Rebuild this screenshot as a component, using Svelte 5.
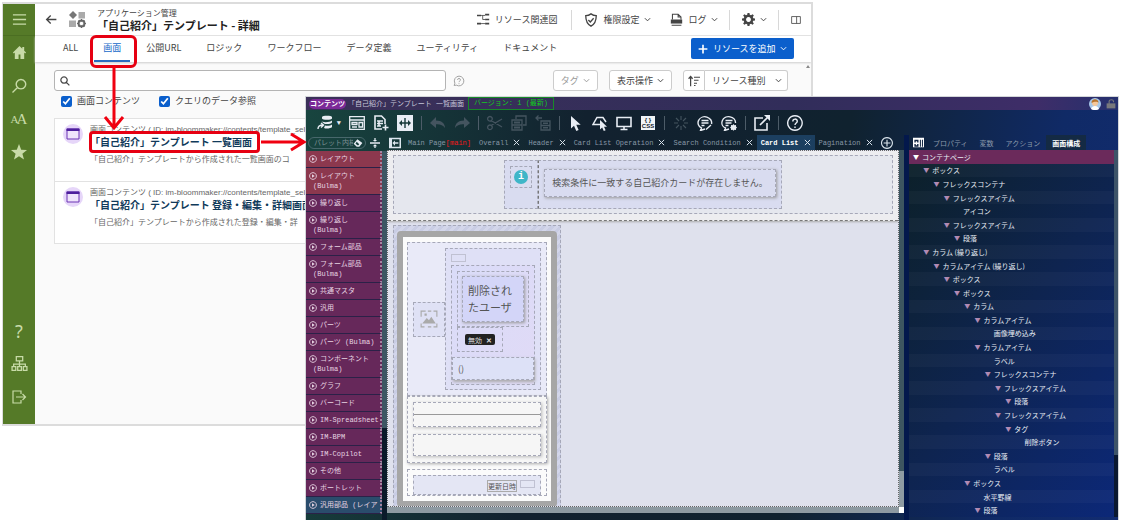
<script lang="ts">
  interface Icon { s?: string; f?: string; w?: number }

  // 16x16 グリッドのアイコン。s = 線、f = 塗り
  const icons: Record<string, Icon> = {
    menu: { s: 'M1 3h14M1 8h14M1 13h14', w: 1.4 },
    home: { f: 'M8 1L1 8l1 1 1-1v7h4v-5h2v5h4V8l1 1 1-1-2-2V2h-2v2z' },
    search: { s: 'M10 1.500a4.700 4.700 0 1 1-.1 0zM6.500 9.500L1.500 14.500', w: 1.4 },
    star: { f: 'M8 0l2.200 5.700 5.800.3-4.600 3.700L13 15.500 8 12.200 3 15.500l1.600-5.800L0 6l5.800-.3z' },
    sitemap: { s: 'M5 1.500h6v4H5zM8 5.500v3M2.500 11V8.500h11V11M8 8v3M1 11h3.500v3.500H1zM6.300 11h3.500v3.500H6.300zM11.600 11H15v3.500h-3.400z', w: 1.2 },
    logout: { s: 'M10 5V2H2v12h8v-3M5 8h9.500M11.500 5l3 3-3 3', w: 1.2 },
    back: { s: 'M14 8H2.500M7 3L2 8l5 5', w: 1.6 },
    lens: { s: 'M6.500 1.500a5 5 0 1 1-.1 0zM10.200 10.200L15 15', w: 2 },
    chevron: { s: 'M2 5l6 6 6-6', w: 2.2 },
    relation: { s: 'M5 3h5M7 3v5h3M5 13h5', w: 1, f: 'M0 2h5v2H0zM10 1h5v2h-5zM10 7h5v2h-5zM0 12h5v2H0zM10 12h5v2h-5z' },
    shield: { s: 'M8 1c2 1.500 4 2 6 2 0 6-1.500 9.500-6 12C3.500 12.500 2 9 2 3c2 0 4-.5 6-2zM5 8l2.200 2.200L11 6', w: 1.5 },
    log: { s: 'M3 8V1.500h7L13.500 5v3M10 1.500V5h3.500M2 15h12', w: 1.3, f: 'M1 8h14v5H1z' },
    gear: { f: 'M6.800 0h2.400l.4 2.200 1.500.6L13 1.500 14.600 3.100l-1.300 1.900.6 1.500L16 6.800v2.400l-2.200.4-.6 1.500 1.400 1.900-1.700 1.600-1.800-1.300-1.500.6L9.200 16H6.800l-.4-2.100-1.500-.6L3 14.600 1.400 13l1.300-1.900-.6-1.500L0 9.200V6.800l2.200-.4.6-1.500L1.400 3 3 1.400l1.900 1.300 1.500-.6zM8 5a3 3 0 1 0 .01 0z' },
    panel: { s: 'M1 2.500h14v11H1zM9 2.500v11', w: 1.3 },
    plus: { s: 'M8 1v14M1 8h14', w: 2.6 },
    question: { s: 'M8 1.500a6.500 6.500 0 1 1-3.500 12L1.500 14l1-3A6.500 6.500 0 0 1 8 1.500zM6 6.500C6 4 10 4 10 6.500 10 8 8 8 8 9.500M8 11v1.200', w: 1.2 },
    sort: { s: 'M3.500 15V2M.8 5l2.700-3 2.700 3M8 3h8M8 7h6M8 11h4M8 14h2', w: 1.6 },
    stack: { s: 'M1 14c0-3 2-4 5-4M4 8l2.500 2L4 12.500', w: 1.4, f: 'M5 2c0-1.800 10-1.800 10 0v1.500c0 1.800-10 1.800-10 0zM4 6c1 1.600 9 1.600 11-.5v2c-1 1.800-7 2-8 1zM8 10.500c2 .6 6 .2 7-1v2.500c-1 1.500-6 2-8 1z' },
    layout: { s: 'M.7 1.700h14.600v12.600H.7zM.7 5h14.600M3 7.500h5v2H3zM3 12h5M10 7.500h3.500v4.500H10z', w: 1.3 },
    addDoc: { s: 'M9 14H2V1h6.500L12 4.500V9M4 6h6M4 8.500h6M4 11h4M6 6v5M12.500 9.500v6M9.500 12.500h6', w: 1.6 },
    fit: { f: 'M0 0h16v16H0zM7.300 3v4.300H5V5L2 8l3 3V8.700h2.300V13h1.400V8.700H11V11l3-3-3-3v2.300H8.700V3z' },
    undo: { f: 'M0 8l6-6v3.500c6 0 9 3.500 9 7.500-2-3-5-4-9-3.700V13z' },
    redo: { f: 'M16 8l-6-6v3.500c-6 0-9 3.500-9 7.500 2-3 5-4 9-3.700V13z' },
    cut: { s: 'M4 5.500L15 12M4 10.500L15 4M3 1.500a2.300 2.300 0 1 1-.1 0zM3 10a2.300 2.300 0 1 1-.1 0z', w: 1.3 },
    copy: { s: 'M5 4V1h10v9h-3M1 5h10v10H1zM1 10h10', w: 1.3, f: 'M3 6.500h6v2H3zM3 11.500h6v2H3z' },
    paste: { s: 'M6 6h9v9H6zM6 10.500h9M1 3h6M3.500.5L1 3l2.500 2.500', w: 1.3, f: 'M8 7.500h5v1.500H8zM8 12h5v1.500H8z' },
    cursor: { f: 'M3 1v12.500l3-2.800L8.300 16l2.300-1L8.300 9.800h4.400z' },
    lasso: { s: 'M9 9.500H1L5 2.500h6l3 4.500', w: 1.5, f: 'M8 5v9.500l2.200-2 1.600 3.500 1.800-.8-1.600-3.500H15z' },
    monitor: { s: 'M1 2.500h14v9H1zM8 11.500v3M4.500 14.500h7', w: 1.6 },
    spark: { s: 'M8 1v4M8 11v4M1 8h4M11 8h4M3 3l3 3M10 10l3 3M13 3l-3 3M6 10l-3 3', w: 1.1 },
    comment: { s: 'M14.500 9A6.800 6 0 1 0 4.500 13L3.500 15.500 8 14M4.500 5.500h7M4.500 8h7M4.500 10.500h3M9 14.500l5-4.500', w: 1.4 },
    commentGear: { s: 'M14.500 8A6.800 6 0 1 0 4.500 13L3.500 15.500 8 14M4.500 5.500h7M4.500 8h6M4.500 10.500h3', w: 1.4, f: 'M12.500 9l1 1.200 1.500-.2v1.500l1 1-1 1v1.500l-1.500-.2-1 1-1-1-1.500.2v-1.500l-1-1 1-1V10l1.500.2z' },
    external: { s: 'M9 3H1v12h12V8M6 10l8.500-8.500', w: 1.6, f: 'M10 0h6v6z' },
    help: { s: 'M8 .8a7.200 7.200 0 1 1-.1 0zM5.800 6.500C5.800 3.300 10.300 3.300 10.300 6.300 10.300 8 8 8 8 10M8 11.500v1.500', w: 1.4 },
    x: { s: 'M2 2l12 12M14 2L2 14', w: 2.200 },
    addTab: { s: 'M8 .8a7.200 7.200 0 1 1-.1 0zM8 3.500v9M3.500 8h9', w: 1.5 },
    play: { s: 'M8 1.200a6.800 6.800 0 1 1-.1 0z', w: 1.8, f: 'M6 4.500l5.500 3.500L6 11.500z' },
    eraser: { f: 'M7 2l8 6-5 6H6L1 9zM6 6L4 9l4 3 2-2z' },
    collapse: { s: 'M0 8h16', w: 2.4, f: 'M7 0h2v3h2.500L8 6 4.500 3H7zM7 16h2v-3h2.500L8 10l-3.500 3H7z' },
    dockLeft: { f: 'M0 1h16v14H0zM4 3v10h10V3zM8 4.500V7h4.500v2H8v2.500L4.500 8z' },
    dockRight: { f: 'M0 1h16v14H0zM2 4v10h6V4zM10 4v10h1.500V4zM13 4v10h1.500V4zM4 6h2v2h2v2H6v2H4v-2H2V8h2z' },
    lock: { s: 'M5 8V3.500c0-3 7-3 7 0V5', w: 1.8, f: 'M1 7h14v8H1z' },
    picture: { s: 'M1 6V1h4M7 1h3M12 1h3v5M15 12v3h-3M10 15H7M4 15H1v-3', w: 1, f: 'M2 12l4-5 2 2 2-3 4 6zM4 3h2v2H4z' },
  };

  const tabs = ['ALL', '画面', '公開URL', 'ロジック', 'ワークフロー', 'データ定義', 'ユーティリティ', 'ドキュメント'];

  const resources = [
    { title: '「自己紹介」テンプレート 一覧画面', text: '「自己紹介」テンプレートから作成された一覧画面のコ', marked: true },
    { title: '「自己紹介」テンプレート 登録・編集・詳細画面', text: '「自己紹介」テンプレートから作成された登録・編集・詳', marked: false },
  ];

  const tools = [
    ['layout', 'addDoc', 'fit'],
    ['undo', 'redo'],
    ['cut', 'copy', 'paste'],
    ['cursor', 'lasso', 'monitor', 'css'],
    ['spark', 'comment', 'commentGear'],
    ['external'],
    ['help'],
  ];
  const disabled = ['undo', 'redo', 'cut', 'copy', 'paste', 'spark'];

  const palette = [
    ['レイアウト', '', 'red'], ['レイアウト', '(Bulma)', 'red'], ['繰り返し'], ['繰り返し', '(Bulma)'],
    ['フォーム部品'], ['フォーム部品', '(Bulma)'], ['共通マスタ'], ['汎用'], ['パーツ'], ['パーツ (Bulma)'],
    ['コンポーネント', '(Bulma)'], ['グラフ'], ['バーコード'], ['IM-Spreadsheet'], ['IM-BPM'], ['IM-Copilot'],
    ['その他'], ['ポートレット'], ['汎用部品 (レイア', '', 'blue'],
  ];

  const pages = ['Overall', 'Header', 'Card List Operation', 'Search Condition', 'Card List', 'Pagination'];

  // [階層, 名前, 子要素あり]
  const tree: [number, string, boolean][] = [
    [0, 'コンテナページ', true], [1, 'ボックス', true], [2, 'フレックスコンテナ', true], [3, 'フレックスアイテム', true],
    [4, 'アイコン', false], [3, 'フレックスアイテム', true], [4, '段落', true], [1, 'カラム (繰り返し)', true],
    [2, 'カラムアイテム (繰り返し)', true], [3, 'ボックス', true], [4, 'ボックス', true], [5, 'カラム', true],
    [6, 'カラムアイテム', true], [7, '画像埋め込み', false], [6, 'カラムアイテム', true], [7, 'ラベル', false],
    [7, 'フレックスコンテナ', true], [8, 'フレックスアイテム', true], [9, '段落', true], [8, 'フレックスアイテム', true],
    [9, 'タグ', true], [10, '削除ボタン', false], [7, '段落', true], [7, 'ラベル', false], [5, 'ボックス', true],
    [6, '水平罫線', false], [6, '段落', true],
  ];
</script>

{#snippet icon(name: string, size = 16)}
  {@const i = icons[name]}
  <svg width={size} height={size} viewBox="0 0 16 16" aria-hidden="true">
    {#if i.f}<path d={i.f} fill="currentColor" fill-rule="evenodd" />{/if}
    {#if i.s}<path d={i.s} fill="none" stroke="currentColor" stroke-width={i.w} />{/if}
  </svg>
{/snippet}

<div class="desktop">
  <section class="admin">
    <nav class="rail">
      <button class="burger" aria-label="メニュー">{@render icon('menu', 15)}</button>
      <button aria-label="ホーム">{@render icon('home', 15)}</button>
      <button aria-label="検索">{@render icon('search', 16)}</button>
      <button class="aa" aria-label="文字サイズ"><small>A</small>A</button>
      <button aria-label="お気に入り">{@render icon('star', 16)}</button>
      <span class="fill"></span>
      <button class="q" aria-label="ヘルプ">?</button>
      <button aria-label="サイトマップ">{@render icon('sitemap', 17)}</button>
      <button aria-label="ログアウト">{@render icon('logout', 16)}</button>
    </nav>

    <div class="main">
      <header>
        <button aria-label="戻る">{@render icon('back', 13)}</button>
        <svg class="app" width="17" height="17" viewBox="0 0 17 17" aria-hidden="true">
          <path d="M4 0l4 4-4 4-4-4z" fill="#777" />
          <path d="M9.500 1H16v6.500H9.500zM0 9.500h7V16H0z" fill="#aaa" />
          <circle cx="12.500" cy="12.500" r="3" fill="none" stroke="#666" stroke-width="2" />
          <path d="M12.500 8v9M8 12.500h9M9.500 9.500l6 6M15.500 9.500l-6 6" stroke="#666" stroke-width="1" />
          <circle cx="12.500" cy="12.500" r="1.800" fill="#fff" />
        </svg>
        <div class="heading">
          <span>アプリケーション管理</span>
          <h1>「自己紹介」テンプレート - 詳細</h1>
        </div>
        <button class="rel">{@render icon('relation', 13)}リソース関連図</button>
        <button class="bar">{@render icon('shield', 14)}権限設定{@render icon('chevron', 7)}</button>
        <button class="log">{@render icon('log', 13)}ログ{@render icon('chevron', 7)}</button>
        <button class="bar" aria-label="設定">{@render icon('gear', 13)}{@render icon('chevron', 7)}</button>
        <button class="bar" aria-label="パネル">{@render icon('panel', 10)}</button>
      </header>

      <div class="tabs">
        {#each tabs as t (t)}
          <button class:active={t === '画面'}>{t}</button>
        {/each}
        <button class="add">{@render icon('plus', 10)}リソースを追加{@render icon('chevron', 7)}</button>
      </div>

      <div class="content">
        <div class="filter">
          <label class="search">{@render icon('lens', 10)}<input type="search" aria-label="リソース検索" /></label>
          <span class="hint">{@render icon('question', 12)}</span>
          <button class="dim">タグ{@render icon('chevron', 7)}</button>
          <button>表示操作{@render icon('chevron', 7)}</button>
          <div class="sort">
            <button aria-label="並び順">{@render icon('sort', 12)}</button>
            <button>リソース種別{@render icon('chevron', 7)}</button>
          </div>
        </div>
        <div class="checks">
          <label><input type="checkbox" checked />画面コンテンツ</label>
          <label><input type="checkbox" checked />クエリのデータ参照</label>
        </div>
        <ul class="list">
          {#each resources as r (r.title)}
            <li>
              <span class="badge">
                <svg width="14" height="12" viewBox="0 0 14 12" aria-hidden="true">
                  <path d="M1 1h12v10H1z" fill="#efe4fb" stroke="#6a32b4" stroke-width="1" /><path d="M.5.5h13V3H.5z" fill="#4d1f9c" />
                </svg>
              </span>
              <div>
                <p class="id">画面コンテンツ ( ID: im-bloommaker://contents/template_self_</p>
                <a href="#resource" class:marked={r.marked}>{r.title}</a>
                <p class="text">{r.text}</p>
              </div>
            </li>
          {/each}
        </ul>
      </div>
    </div>
  </section>

  <section class="editor">
    <div class="strip">
      <span class="kind">コンテンツ</span>
      <span class="name">「自己紹介」テンプレート 一覧画面</span>
      <span class="version">バージョン: 1 (最新)</span>
      <span class="fill"></span>
      <svg width="12" height="12" viewBox="0 0 12 12" aria-hidden="true">
        <circle cx="6" cy="6" r="6" fill="#a9c9ea" /><circle cx="6" cy="5" r="3" fill="#f5c79a" />
        <path d="M2.500 5C2 0 10 0 9.500 5 8 3 5 4 2.500 5z" fill="#b8742c" /><path d="M2 11c1-4 7-4 8 0-2 1.400-6 1.400-8 0z" fill="#fff" />
      </svg>
      <span class="lock">{@render icon('lock', 10)}</span>
    </div>

    <div class="tools">
      <button class="stack" aria-label="リソース">{@render icon('stack')}<span>▼</span></button>
      {#each tools as group, g}
        {#if g}<i></i>{/if}
        {#each group as t (t)}
          <button aria-label={t} class:off={disabled.includes(t)}>
            {#if t === 'css'}<span class="css"><b>{'{ }'}</b><b>CSS</b></span>{:else}{@render icon(t)}{/if}
          </button>
        {/each}
      {/each}
    </div>

    <div class="body">
      <aside class="palette">
        <div class="find">
          <label><input type="text" placeholder="パレット内検索" aria-label="パレット内検索" />{@render icon('eraser', 10)}</label>
          {@render icon('collapse', 10)}
        </div>
        {#each palette as [name, sub, tone]}
          <button class={['item', tone, sub && 'double']}>
            {@render icon('play', 8)}<span>{name}</span>
            {#if sub}<small>{sub}</small>{/if}
          </button>
        {/each}
      </aside>
      <div class="gutter"></div>

      <div class="work">
        <div class="pages">
          <button class="dock" aria-label="パレットを閉じる">{@render icon('dockLeft', 12)}</button>
          <button class="home">Main Page<em>[main]</em></button>
          {#each pages as p (p)}
            <button class:active={p === 'Card List'}>{p}{@render icon('x', 7)}</button>
          {/each}
          <button class="new" aria-label="ページを追加">{@render icon('addTab', 12)}</button>
        </div>
        <div class="view">
          <div class="canvas">
            <div class="notice">
              <div class="box inner">
                <div class="message">
                  <div class="box cell"><div class="box info"><span>i</span></div></div>
                  <div class="box cell"><p class="box para">検索条件に一致する自己紹介カードが存在しません。</p></div>
                </div>
              </div>
            </div>
            <div class="box column">
              <div class="card">
                <div class="box profile">
                  <div class="box photo">{@render icon('picture', 18)}</div>
                  <div class="box detail">
                    <div class="chip"></div>
                    <div class="box user">
                      <div class="box who"><p class="box">削除され<br />たユーザ</p></div>
                      <div class="box tagbox"><span class="tag">無効 <b>✕</b></span></div>
                      <p class="box kana">()</p>
                    </div>
                  </div>
                </div>
                <div class="box lines">
                  <div class="box"><hr /></div>
                  <div class="box blank"></div>
                </div>
                <div class="box foot">
                  <div class="box"><span>更新日時</span><div class="chip"></div></div>
                </div>
              </div>
            </div>
          </div>
          <div class="vbar"></div>
          <div class="hbar"></div>
          <div class="corner"></div>
        </div>
      </div>

      <div class="split"></div>
      <aside class="outline">
        <div class="panes">
          <button class="dock" aria-label="パネルを閉じる">{@render icon('dockRight', 11)}</button>
          <button>プロパティ</button>
          <button>変数</button>
          <button>アクション</button>
          <button class="active">画面構成</button>
        </div>
        <div class="treewrap">
          <ul>
            {#each tree as [depth, name, open], n}
              <li class:selected={n === 0} style="padding-left: {depth * 5}%">
                <span>{open ? '▼' : ''}</span>{name}
              </li>
            {/each}
          </ul>
          <div class="track"></div>
        </div>
      </aside>
    </div>
  </section>

  <svg class="arrows" width="310" height="160" viewBox="0 0 310 160" aria-hidden="true">
    <path d="M114 66v61M105 117l9 11 9-11M261 142h42M291 134l13 8-13 8" />
  </svg>
</div>

<style>
  :global(body) { background: #fff; }
  * { box-sizing: border-box; }
  .desktop {
    position: relative; display: grid; grid-template: minmax(0, 1fr) / minmax(0, 1fr); height: 100vh; overflow: hidden;
    font: 9px/12px "Liberation Sans", "Noto Sans CJK JP", sans-serif; color: #444;
  }
  .admin, .editor { grid-area: 1 / 1; display: flex; overflow: hidden; }
  button {
    display: inline-flex; align-items: center; justify-content: center; padding: 0; border: 0;
    background: none; color: inherit; font: inherit; white-space: nowrap; cursor: pointer;
  }
  svg { flex: none; display: block; }
  ul, p, h1 { margin: 0; padding: 0; list-style: none; }
  .fill { flex: 1; }

  /* 管理画面 */
  .admin { z-index: 0; margin: 2px 27.5% 94px 2px; border: solid #dcdcdc; border-width: 2px 2px 2px 1px; background: #fafafa; }
  .rail { display: flex; flex-direction: column; flex: none; width: 32px; padding-bottom: 11px; background: #557a28; color: #c8dba8; }
  .rail button { height: 33px; }
  .rail .burger { height: 32px; border-bottom: 1px solid #4b6e22; }
  .aa { font: 15px/16px "Liberation Serif", serif; }
  .aa small { font-size: 11px; margin-right: -2px; }
  .rail .q { font-family: "Noto Sans", sans-serif; font-size: 18px; }
  .main { flex: 1; min-width: 0; display: flex; flex-direction: column; font-family: "Noto Sans CJK JP", sans-serif; }
  header { display: flex; align-items: center; height: 32px; flex: none; padding: 0 10px; background: #fff; border-bottom: 1px solid #e4e4e4; }
  .app { margin: 0 11px 0 11px; }
  .heading { flex: 1; min-width: 0; white-space: nowrap; }
  .heading span { display: block; font-size: 8px; line-height: 11px; }
  h1 { font-size: 11px; line-height: 14px; color: #222; }
  header button { gap: 5px; height: 20px; }
  header .rel { margin-right: 14px; }
  header .bar { border-left: 1px solid #d8d8d8; padding: 0 11px 0 12px; }
  header .bar:last-child { padding-right: 0; }
  header .log { padding: 0 11px 0 8px; }
  .tabs { display: flex; gap: 7px; height: 26px; flex: none; padding: 0 17px 0 19px; background: #fff; box-shadow: 0 1px 2px #ccc; position: relative; z-index: 1; }
  .tabs button { position: relative; padding: 0 9px; border-bottom: 2px solid transparent; }
  .tabs .active { color: #1569c9; border-color: #2a6cc0; }
  .tabs .active::after { content: ''; position: absolute; inset: -1px -7px -8px -4px; border: 3px solid #e60012; border-radius: 6px; }
  .tabs .add { margin: 2px 0 3px auto; padding: 0 7px; gap: 5px; border: 0; border-radius: 2px; background: #0b5fcc; color: #fff; }
  .content { position: relative; flex: 1; min-height: 0; overflow: hidden; padding: 8px 23px 0 19px; }
  .content::after { content: ''; position: absolute; top: 1px; right: 1px; border: 2px solid transparent; border-bottom: 3px solid #888; }
  .filter { display: flex; align-items: center; height: 21px; }
  .search { flex: 1; display: flex; align-items: center; gap: 5px; height: 21px; padding-left: 5px; border: 1px solid #b4b4b4; border-radius: 3px; background: #fff; }
  .search input { flex: 1; min-width: 0; border: 0; outline: 0; background: none; font: inherit; }
  .hint { color: #999; margin: 0 88px 0 7px; }
  .filter button { height: 21px; padding: 0 7px; gap: 4px; border: 1px solid #ccc; border-radius: 3px; background: #fff; margin-right: 11px; }
  .filter .dim { color: #999; }
  .sort { display: flex; }
  .filter .sort button { margin: 0; padding: 0 4px; border-radius: 3px 0 0 3px; }
  .filter .sort button + button { padding: 0 5px 0 7px; gap: 10px; border-left: 0; border-radius: 0 3px 3px 0; }
  .checks { display: flex; gap: 19px; padding: 4px 7px 0; }
  .checks label { display: flex; align-items: center; gap: 5px; }
  .checks input { width: 11px; height: 11px; margin: 0; accent-color: #0b5fcc; }
  .list { margin: 11px -16px 0 0; border: 1px solid #e2e2e2; background: #fff; }
  li { white-space: nowrap; }
  .list li { display: flex; gap: 7px; height: 62px; padding: 5px 0 0 8px; overflow: hidden; }
  .list li + li { border-top: 1px solid #e2e2e2; }
  .badge { display: grid; place-items: center; flex: none; width: 20px; height: 20px; border-radius: 50%; background: #e6d6f9; }
  .id, .text { color: #666; }
  .id { font: 8px/11px "Liberation Sans", "Noto Sans CJK JP", sans-serif; }
  .list a { position: relative; display: inline-block; font-size: 10px; line-height: 13px; font-weight: bold; color: #103a5a; text-decoration: none; }
  .list .marked::after { content: ''; position: absolute; inset: -4px -8px -5px -1px; border: 3px solid #e60012; border-radius: 4px; }
  .text { margin-top: 4px; font-size: 8px; }

  .arrows { position: absolute; z-index: 2; left: 0; top: 0; fill: none; stroke: #f00010; stroke-width: 3; pointer-events: none; }

  /* エディタ */
  .editor {
    z-index: 1; flex-direction: column; margin: 96px 3px 0 305px; border: solid #d3d6d9; border-width: 1px 1px 0;
    background: linear-gradient(100deg, #18453f 0, #12212f 32%, #10222f 62%, #102a66 86%, #122c70);
    color: #e8edf4; font: 7px/10px "Liberation Mono", "Noto Sans CJK JP", monospace;
  }
  .strip { display: flex; align-items: center; flex: none; height: 13px; padding: 0 2px 0 3px; background: linear-gradient(90deg, #3b3059, #312d5a 60%, #3e2d68 90%, #25306e); }
  .kind { padding: 0 1px; border-radius: 5px; background: #7c2a98; color: #fff; font-weight: bold; }
  .name { margin-left: 2px; color: #c6c6d8; }
  .version { margin-left: 4px; padding: 0 5px; border: 1px solid #188a28; line-height: 11px; color: #12c81e; }
  .lock { margin-left: 5px; color: #78787c; }
  .tools { display: flex; align-items: center; gap: 8px; flex: none; height: 25px; padding-left: 11px; }
  .tools i { width: 1px; height: 14px; background: #4d5c68; }
  .tools button { flex: none; width: 16px; height: 16px; }
  .tools .stack { width: 24px; justify-content: space-between; }
  .off { color: #44545f; }
  .css { display: flex; flex-direction: column; justify-content: center; width: 14px; height: 14px; background: #f0f4f6; color: #13202c; font: 6px/6px "Liberation Sans", sans-serif; }
  .body { flex: 1; min-height: 0; display: grid; grid-template: minmax(0, 1fr) / 76px 5px minmax(0, 1fr) 5px 209px; }
  .palette { overflow: hidden; }
  .find { display: flex; align-items: center; gap: 4px; height: 16px; padding: 0 2px; }
  .find label { flex: 1; min-width: 0; display: flex; align-items: center; height: 12px; padding: 0 2px 0 5px; border: 1px solid #48686c; border-radius: 6px; }
  .find input { width: 100%; min-width: 0; padding: 0; border: 0; outline: 0; background: none; color: #fff; font: inherit; }
  .find input::placeholder { color: #7d9094; }
  .item {
    display: grid; grid-template-columns: 8px 1fr; column-gap: 3px; justify-items: start; align-content: center;
    width: 100%; height: 17px; padding-left: 3px; background: #66285a; color: #e6d4e2;
    border-bottom: 1px solid #2b2148; border-right: 2px dotted #a584a2;
  }
  .double { height: 27px; }
  .item small { grid-column: 1 / 3; margin-left: 4px; font-size: 7px; }
  .item.red { background: #8c384e; }
  .item.blue { background: #2a4c6c; }
  .gutter { margin-top: 16px; background: linear-gradient(#3c5663 75%, #0a1a2a 75%); }
  .work { display: flex; flex-direction: column; min-width: 0; min-height: 0; padding-bottom: 7px; }
  .pages { display: flex; height: 15px; flex: none; color: #8797a6; overflow: hidden; }
  .pages button { flex: none; gap: 5px; padding: 0 4px; }
  .pages svg { color: #dce6ee; }
  .pages .dock { padding: 0 2px; }
  .pages .home { gap: 0; padding-left: 5px; }
  .pages em { color: #f01818; font-style: normal; }
  .active { color: #fff; }
  .pages .active { background: #1c3f60; font-weight: bold; }
  .view { flex: 1; min-height: 0; display: grid; grid-template: minmax(0, 1fr) 6px / minmax(0, 1fr) 5px; }
  .canvas { overflow: hidden; background: #dfe1ed; border: 1px dotted #666; color: #555; font-family: "Noto Sans CJK JP", sans-serif; }
  .vbar { background: linear-gradient(#3d5560 90%, #8e9ba3 90%); }
  .hbar { background: #8e9aa2; }
  .corner { background: #fff; }
  .box { border: 1px dashed #a6a8b8; }
  .notice { padding: 4px 5px 6px; background: #ededf0; border-bottom: 1px dashed #777; box-shadow: 0 1px 2px #aaa; }
  .inner { display: flex; justify-content: center; padding: 4px; background: #e5e7ee; }
  .message { display: flex; height: 49px; background: #d9dcf0; }
  .cell { padding: 5px; }
  .cell + .cell { border-left-color: #777; padding-top: 8px; }
  .info { display: grid; place-items: center; width: 22px; height: 22px; }
  .info span { width: 14px; height: 14px; border-radius: 50%; background: #3fb6c8; color: #fff; text-align: center; font: bold 10px/14px "Liberation Mono", monospace; }
  .para { padding: 0 7px; font-size: 9px; line-height: 26px; box-shadow: 1px 1px 3px #999; }
  .column { width: 168px; margin: 4px 0 0 5px; padding: 5px 3px 0; background: repeating-linear-gradient(135deg, #d3d6ea 0 3px, #c9cde4 3px 6px); }
  .card { border: 6px solid #a6a6a6; border-radius: 4px; padding: 5px 4px; background: #fbfbfb; }
  .profile { display: flex; align-items: center; padding: 5px; background: #e9eaf8; }
  .photo { display: grid; place-items: center; width: 32px; height: 35px; background: #dfe1f5; color: #aaa; }
  .detail { flex: 1; padding: 5px 5px 4px; background: #dfe0f6; }
  .chip { width: 15px; height: 8px; border: 1px solid #c0c1d2; }
  .user { margin-top: 3px; padding: 5px 0 4px; background: linear-gradient(120deg, #dadcf8, #e0daf6); }
  .who { margin: 0 5px; padding: 4px; }
  .who p { padding: 5px; font-size: 11px; line-height: 17px; background: #d3d5f8; box-shadow: 1px 1px 3px #999; }
  .tagbox { width: 46px; height: 25px; margin: 0 0 5px 5px; padding: 6px 7px; }
  .tag { display: flex; align-items: center; justify-content: center; gap: 4px; height: 11px; border-radius: 2px; background: #222; color: #ddd; }
  .kana { padding: 0 5px; font-size: 9px; line-height: 21px; background: #dde1f7; box-shadow: 1px 2px 3px #aaa; }
  .lines { padding: 5px 5px 6px; background: #f6f6f6; box-shadow: 1px 1px 3px #aaa; }
  .lines .box { height: 25px; padding: 11px 0 0; box-shadow: 1px 1px 3px #bbb; }
  .lines .blank { margin-top: 7px; height: 22px; }
  hr { margin: 0; border: 0; border-top: 1px solid #999; }
  .foot { margin-top: 6px; padding: 5px 5px 0; }
  .foot .box { display: flex; justify-content: flex-end; gap: 3px; height: 20px; padding: 4px 5px 0; background: #e4e6f4; }
  .foot span { height: 12px; border: 1px solid #aaa; }
  .split { background: #03184c; }
  .outline { display: flex; flex-direction: column; min-width: 0; min-height: 0; padding-bottom: 3px; font-family: "Noto Sans CJK JP", sans-serif; }
  .panes { display: flex; height: 15px; flex: none; color: #8b9aab; }
  .panes button { padding: 0 6px; }
  .panes .dock { padding: 0 3px 0 4px; color: #fff; }
  .panes .active { background: #142a44; font-weight: bold; }
  .treewrap { flex: 1; min-height: 0; display: flex; }
  .treewrap ul { flex: 1; display: grid; grid-auto-rows: minmax(0, 1fr); background: linear-gradient(125deg, #0c2028, #0e2450 50%, #0c2878); }
  .treewrap li { display: flex; align-items: center; }
  .treewrap li:nth-child(even) { background: rgba(255, 255, 255, 0.03); }
  .treewrap li span { width: 13px; padding-left: 4px; flex: none; font-size: 6px; color: #b18ab4; }
  .treewrap .selected { background: #6b2a5b; }
  .treewrap .selected span { color: #fff; }
  .track { width: 4px; background: linear-gradient(#3d5368 83%, #0a1830 83%); }
</style>
